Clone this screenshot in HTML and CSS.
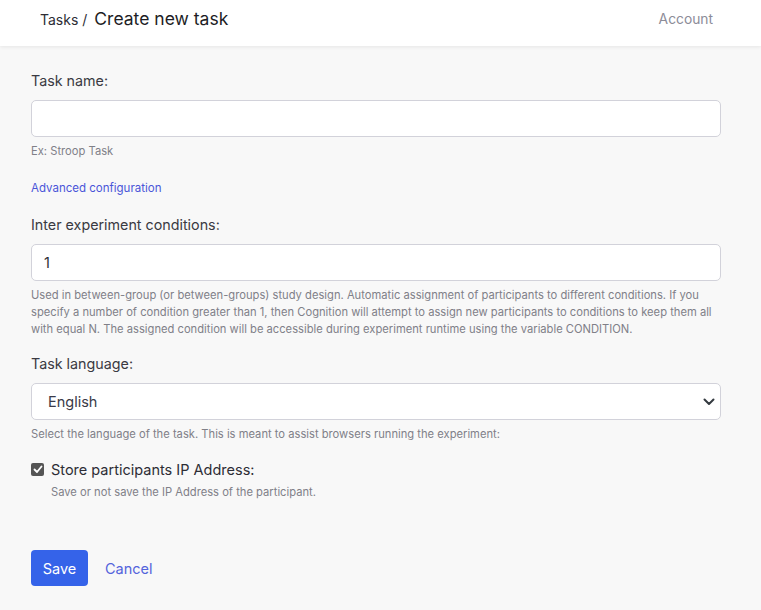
FILE: index.html
```html
<!DOCTYPE html>
<html>
<head>
<meta charset="utf-8">
<link rel="stylesheet" href="styles.css">
</head>
<body>
<header class="topbar">
  <div class="crumbs"><span class="crumb">Tasks /</span><span class="title">Create new task</span></div>
  <a class="account">Account</a>
</header>
<main class="form">
  <div class="field">
    <label class="label">Task name:</label>
    <input class="input" type="text">
    <div class="help">Ex: Stroop Task</div>
  </div>
  <a class="advanced">Advanced configuration</a>
  <div class="field">
    <label class="label">Inter experiment conditions:</label>
    <input class="input" type="text" value="1">
    <div class="help">Used in between-group (or between-groups) study design. Automatic assignment of participants to different conditions. If you specify a number of condition greater than 1, then Cognition will attempt to assign new participants to conditions to keep them all with equal N. The assigned condition will be accessible during experiment runtime using the variable CONDITION.</div>
  </div>
  <div class="field">
    <label class="label">Task language:</label>
    <div class="select">
      <span>English</span>
      <svg width="12" height="8" viewBox="0 0 12 8"><path d="M1.5 1.5 6 6l4.5-4.5" fill="none" stroke="#343a40" stroke-width="2" stroke-linecap="round" stroke-linejoin="round"/></svg>
    </div>
    <div class="help">Select the language of the task. This is meant to assist browsers running the experiment:</div>
  </div>
  <div class="check-field">
    <div class="check-row">
      <span class="checkbox"><svg width="10" height="9" viewBox="0 0 10 9"><path d="M1.5 4.5 4 7l4.5-5.5" fill="none" stroke="#fff" stroke-width="1.8" stroke-linecap="round" stroke-linejoin="round"/></svg></span>
      <span class="check-label">Store participants IP Address:</span>
    </div>
    <div class="help check-help">Save or not save the IP Address of the participant.</div>
  </div>
  <div class="actions">
    <button class="save">Save</button>
    <a class="cancel">Cancel</a>
  </div>
</main>
</body>
</html>
```
FILE: styles.css
```css
* { box-sizing: border-box; }
html, body { margin: 0; padding: 0; }
body {
  background: #f8f8f8;
  font-family: Inter, "Noto Sans", sans-serif;
  color: #2d2d35;
  height: 610px;
  overflow: hidden;
}
.topbar {
  height: 46px;
  background: #fff;
  box-shadow: 0 1px 4px rgba(0,0,0,0.08);
  display: flex;
  align-items: center;
  justify-content: space-between;
  padding: 0 48px 0 40px;
}
.crumbs { display: flex; align-items: baseline; gap: 7px; margin-top: -9px; }
.crumb { font-size: 14px; color: #2d2d35; }
.title { font-size: 17.5px; color: #1d1d25; }
.account { font-size: 13.8px; color: #8c8c98; margin-top: -9px; }
.form { padding: 26px 40px 0 31px; }
.field { display: flex; flex-direction: column; }
.label { font-size: 14.3px; color: #3a3a42; margin-bottom: 10px; line-height: 18px; }
.input, .select {
  width: 690px;
  height: 37px;
  border: 1px solid #d2d2da;
  border-radius: 5px;
  background: #fff;
  font-family: inherit;
  font-size: 14.5px;
  padding: 0 12px;
  color: #2d2d35;
}
.select {
  display: flex; align-items: center; justify-content: space-between;
  padding: 0 5px 0 16px;
  color: #3a3a48;
}
.help {
  font-size: 11.2px;
  color: #808088;
  line-height: 17px;
  margin-top: 6px;
}
.advanced {
  display: block;
  font-size: 11.5px;
  color: #4a55d8;
  margin-top: 20px;
  margin-bottom: 19px;
  line-height: 17px;
}
.field + .field { margin-top: 17px; }
.check-field { margin-top: 18px; }
.check-row { display: flex; align-items: center; gap: 7px; }
.checkbox {
  width: 13px; height: 13px; border-radius: 2px; background: #555;
  display: inline-flex; align-items: center; justify-content: center;
}
.check-label { font-size: 14.5px; color: #2d2d35; }
.check-help { margin-left: 20px; margin-top: 6px; }
.actions { display: flex; align-items: center; gap: 17px; margin-top: 49px; }
.save {
  width: 57px; height: 36px; border: none; border-radius: 4px;
  background: #3563e9; color: #fff; font-family: inherit; font-size: 14.5px;
}
.cancel { font-size: 14.5px; color: #5464dc; }
```
